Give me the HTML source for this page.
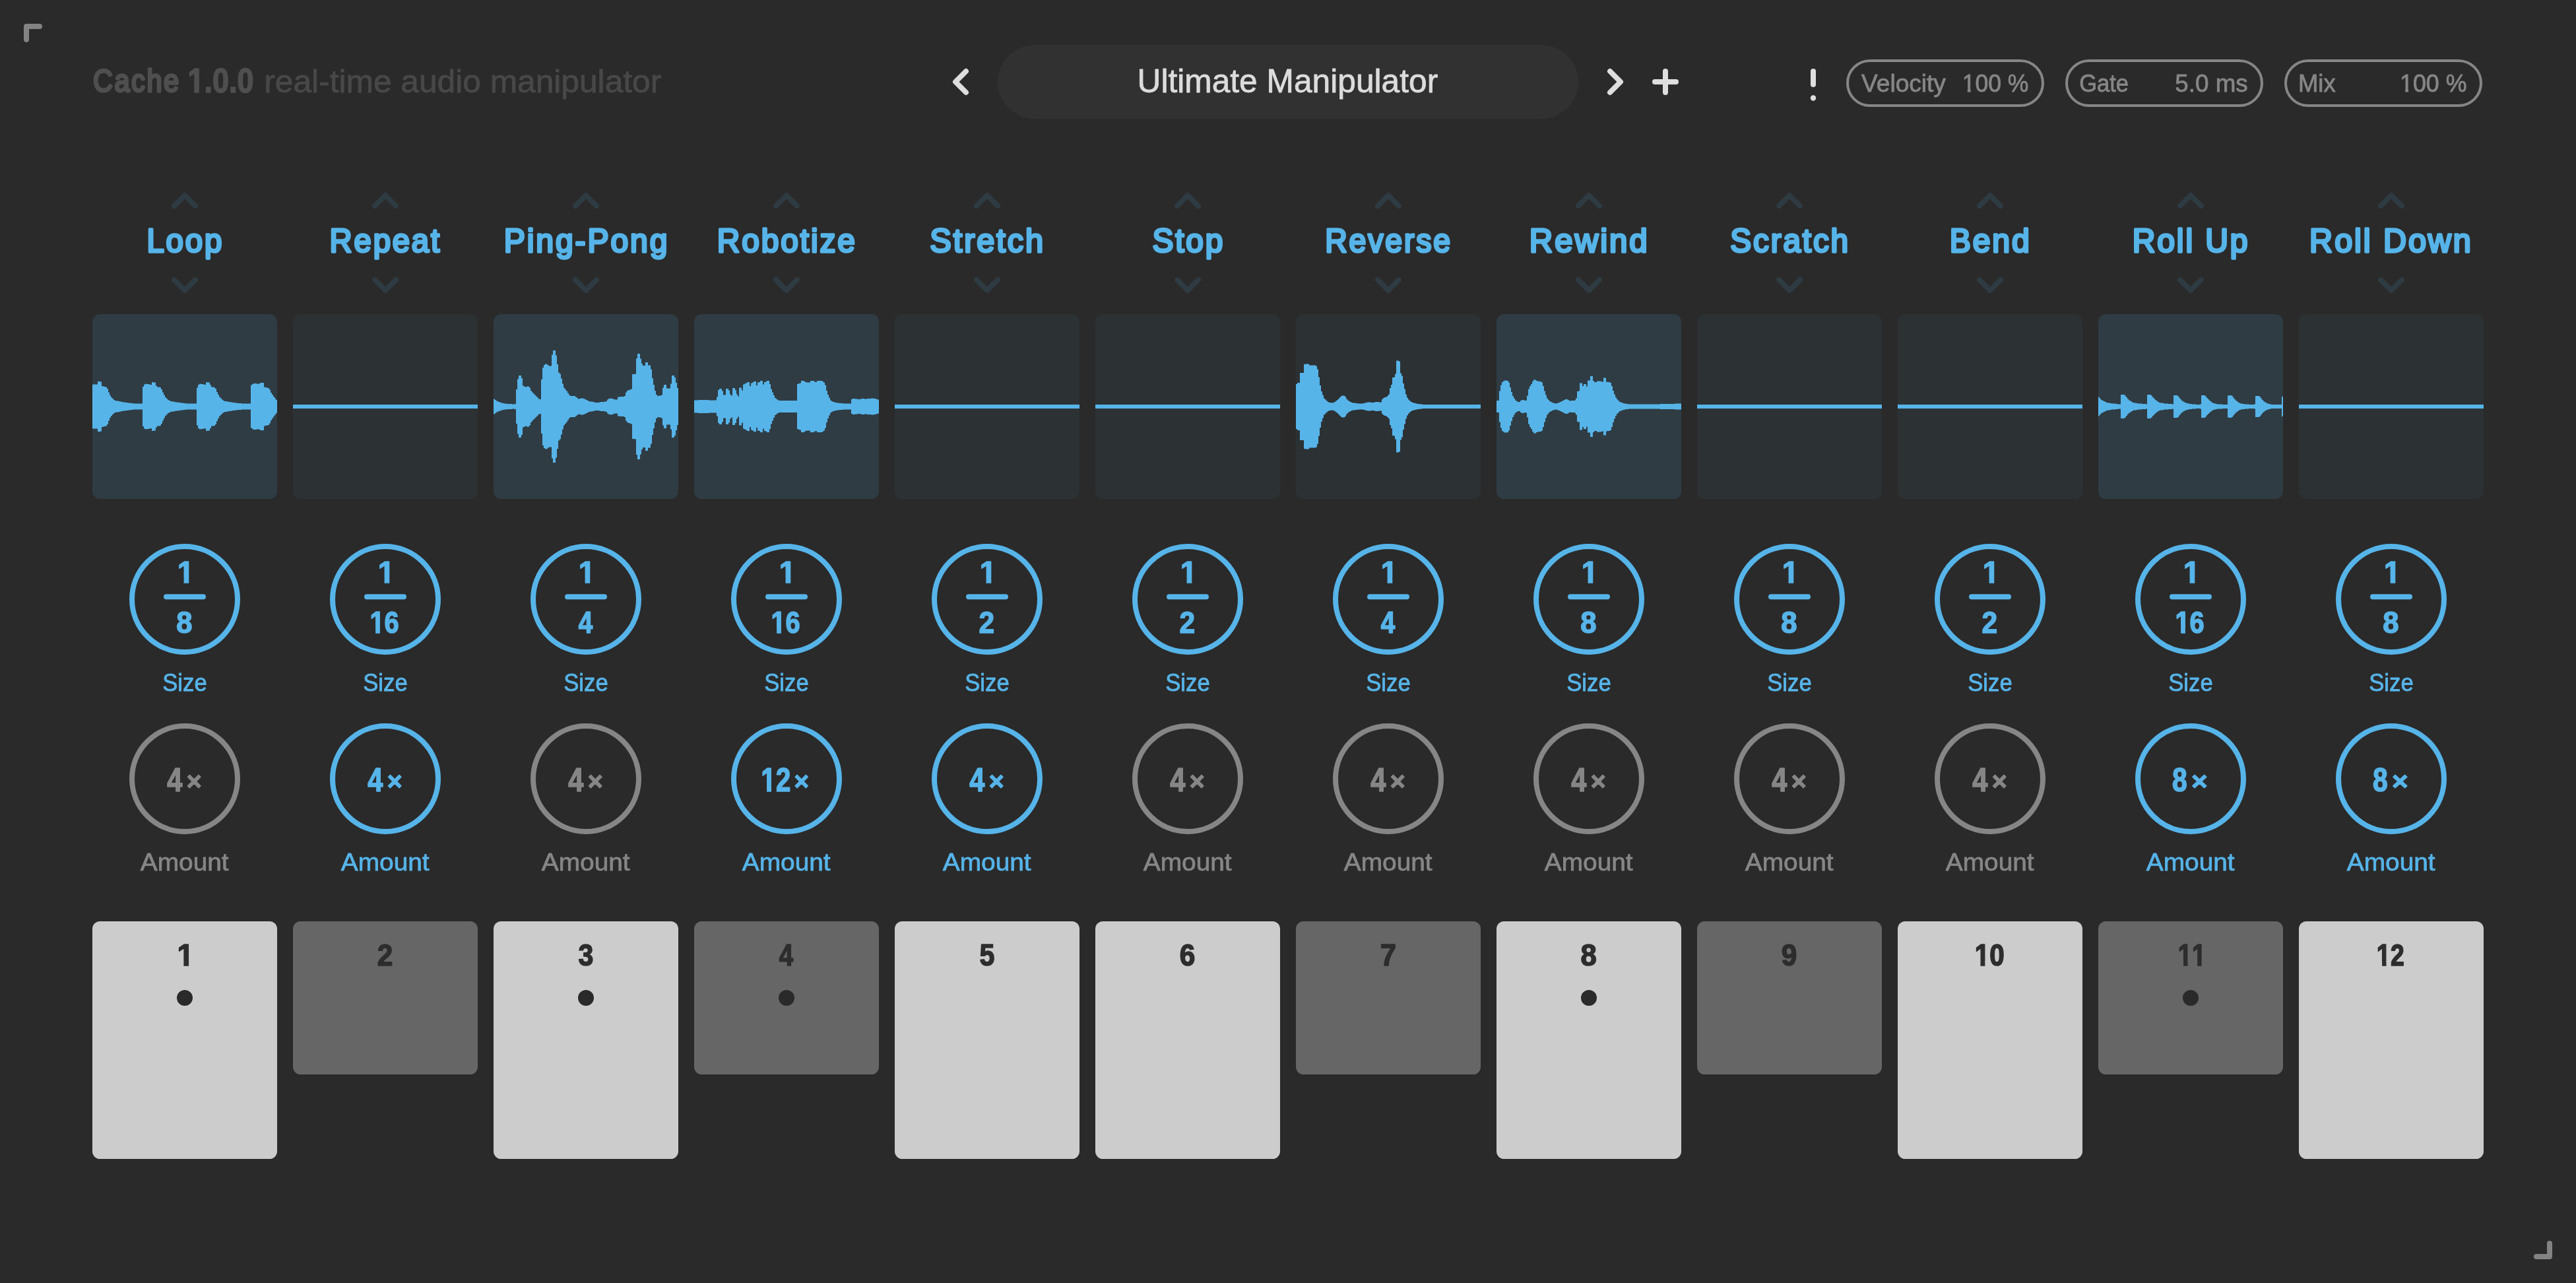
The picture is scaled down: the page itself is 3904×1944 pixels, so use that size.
<!DOCTYPE html>
<html lang="en"><head><meta charset="utf-8"><title>Cache 1.0.0</title>
<style>html,body{margin:0;padding:0;background:#2a2a2a;}body{width:3904px;height:1944px;overflow:hidden;font-family:"Liberation Sans",sans-serif;}svg{display:block;will-change:transform}svg text.d{font-size:100px;font-weight:bold;font-kerning:none}svg text{vector-effect:non-scaling-stroke;stroke-linejoin:round;stroke-linecap:round}</style>
</head><body>
<svg width="3904" height="1944" viewBox="0 0 3904 1944" font-family='"Liberation Sans", sans-serif'>
<rect width="3904" height="1944" fill="#2a2a2a"/>
<g fill="none" stroke="#838383" stroke-width="8" stroke-linecap="round" stroke-linejoin="round">
<polyline points="40,60 40,40 60,40"/>
<polyline points="3844,1904 3864,1904 3864,1884"/>
</g>
<rect x="1512" y="68" width="880" height="112" rx="56" fill="#313131"/>
<g fill="none" stroke="#dedede" stroke-width="8" stroke-linecap="round" stroke-linejoin="round">
<polyline points="1464,108 1448,124 1464,140"/>
<polyline points="2440,108 2456,124 2440,140"/>
<path d="M2508 124H2540M2524 108V140"/>
<path d="M2748 108V128"/>
</g>
<circle cx="2748" cy="148.5" r="4.2" fill="#dedede"/>
<rect x="2800" y="92" width="296" height="68" rx="34" fill="none" stroke="#868686" stroke-width="4"/>
<rect x="3132" y="92" width="296" height="68" rx="34" fill="none" stroke="#868686" stroke-width="4"/>
<rect x="3464" y="92" width="296" height="68" rx="34" fill="none" stroke="#868686" stroke-width="4"/>
<g fill="none" stroke="#2f3b43" stroke-width="8" stroke-linecap="round" stroke-linejoin="round"><polyline points="264,312 280,296 296,312"/><polyline points="264,424 280,440 296,424"/></g>
<rect x="140" y="476" width="280" height="280" rx="11.5" fill="#2f3c44"/>
<path d="M140,582.5H148V578.0H152V578.5H154V585.0H156V585.5H158V586.0H160V586.5H162V589.0H164V594.5H166V599.0H168V602.0H170V604.0H172V606.0H174V607.0H176V607.5H180V608.0H182V608.5H184V609.0H186V609.5H190V610.0H194V610.5H198V611.0H202V611.5H216V586.0H218V582.5H220V581.5H222V582.0H226V582.5H228V583.0H230V579.0H232V579.5H236V584.5H238V586.5H242V587.0H244V590.0H246V594.5H248V598.5H250V602.0H252V604.0H254V606.0H256V607.0H258V608.0H260V608.5H264V609.0H266V609.5H270V610.0H274V610.5H278V611.0H282V611.5H298V587.5H300V583.0H302V581.5H304V582.0H308V582.5H310V583.0H312V579.0H314V579.5H318V583.0H320V586.5H324V587.0H326V589.0H328V594.0H330V598.0H332V601.5H334V603.5H336V605.5H338V607.0H340V608.0H344V608.5H346V609.0H350V609.5H352V610.0H356V610.5H360V611.0H366V611.5H380V583.5H382V582.0H384V581.0H388V581.5H394V580.0H400V586.5H402V587.0H404V587.5H406V588.0H408V590.5H410V595.0H412V598.0H414V601.0H416V603.5H418V606.0H420V626.0H418V628.5H416V631.0H414V634.0H412V637.0H410V641.5H408V644.0H406V644.5H404V645.0H402V645.5H400V652.0H394V650.5H388V651.0H384V650.0H382V648.5H380V620.5H366V621.0H360V621.5H356V622.0H352V622.5H350V623.0H346V623.5H344V624.0H340V625.0H338V626.5H336V628.5H334V630.5H332V634.0H330V638.0H328V643.0H326V645.0H324V645.5H320V649.0H318V652.5H314V653.0H312V649.0H310V649.5H308V650.0H304V650.5H302V649.0H300V644.5H298V620.5H282V621.0H278V621.5H274V622.0H270V622.5H266V623.0H264V623.5H260V624.0H258V625.0H256V626.0H254V628.0H252V630.0H250V633.5H248V637.5H246V642.0H244V645.0H242V645.5H238V647.5H236V652.5H232V653.0H230V649.0H228V649.5H226V650.0H222V650.5H220V649.5H218V646.0H216V620.5H202V621.0H198V621.5H194V622.0H190V622.5H186V623.0H184V623.5H182V624.0H180V624.5H176V625.0H174V626.0H172V628.0H170V630.0H168V633.0H166V637.5H164V643.0H162V645.5H160V646.0H158V646.5H156V647.0H154V653.5H152V654.0H148V649.5H140Z" fill="#56b4e9"/>
<circle cx="280" cy="908" r="80" fill="none" stroke="#56b4e9" stroke-width="8"/>
<path d="M252 904.3H308" stroke="#56b4e9" stroke-width="8" stroke-linecap="round"/>
<circle cx="280" cy="1180" r="80" fill="none" stroke="#868686" stroke-width="8"/>
<rect x="140" y="1396" width="280" height="360" rx="11.5" fill="#cccccc"/>
<circle cx="280" cy="1512" r="12" fill="#2a2a2a"/>
<g fill="none" stroke="#2f3b43" stroke-width="8" stroke-linecap="round" stroke-linejoin="round"><polyline points="568,312 584,296 600,312"/><polyline points="568,424 584,440 600,424"/></g>
<rect x="444" y="476" width="280" height="280" rx="11.5" fill="#2c3134"/>
<rect x="444" y="613" width="280" height="6" fill="#56b4e9"/>
<circle cx="584" cy="908" r="80" fill="none" stroke="#56b4e9" stroke-width="8"/>
<path d="M556 904.3H612" stroke="#56b4e9" stroke-width="8" stroke-linecap="round"/>
<circle cx="584" cy="1180" r="80" fill="none" stroke="#56b4e9" stroke-width="8"/>
<rect x="444" y="1396" width="280" height="232" rx="11.5" fill="#666666"/>
<g fill="none" stroke="#2f3b43" stroke-width="8" stroke-linecap="round" stroke-linejoin="round"><polyline points="872,312 888,296 904,312"/><polyline points="872,424 888,440 904,424"/></g>
<rect x="748" y="476" width="280" height="280" rx="11.5" fill="#2f3c44"/>
<path d="M748,604.5H750V606.0H752V607.5H754V608.5H756V609.0H758V610.0H760V610.5H762V611.0H764V611.5H768V612.0H776V612.5H780V612.0H782V590.0H784V574.5H786V569.0H790V573.0H792V584.5H794V585.5H796V586.5H798V585.5H802V587.5H804V592.0H806V594.5H808V596.5H810V598.5H812V600.5H814V602.5H816V604.5H818V605.0H820V575.0H822V557.0H824V553.0H826V551.5H828V552.0H830V553.5H832V554.5H836V537.5H838V531.0H842V538.5H844V552.0H846V564.5H848V566.5H850V573.5H852V581.5H854V587.5H856V590.0H858V592.5H860V595.5H862V598.5H864V600.0H872V601.5H874V603.0H876V604.5H878V604.0H880V603.5H884V604.0H886V605.0H888V606.0H890V607.0H892V608.0H894V608.5H898V609.0H900V609.5H902V610.0H908V609.5H910V609.0H916V608.5H918V608.0H920V605.5H922V604.0H926V603.5H928V604.5H930V605.0H932V605.5H936V601.5H940V601.0H946V600.0H948V594.5H950V592.0H952V591.0H954V590.5H956V589.5H958V567.0H962V566.5H964V543.0H966V536.0H970V543.5H972V551.0H974V554.0H978V549.0H982V553.5H986V559.5H988V573.0H990V583.0H992V592.0H994V598.0H996V600.0H998V599.5H1002V598.5H1004V587.5H1006V583.0H1010V588.5H1016V581.5H1018V569.0H1022V572.0H1024V580.0H1026V588.0H1028V644.0H1026V652.0H1024V660.0H1022V663.0H1018V650.5H1016V643.5H1010V649.0H1006V644.5H1004V633.5H1002V632.5H998V632.0H996V634.0H994V640.0H992V649.0H990V659.0H988V672.5H986V678.5H982V683.0H978V678.0H974V681.0H972V688.5H970V696.0H966V689.0H964V665.5H962V665.0H958V642.5H956V641.5H954V641.0H952V640.0H950V637.5H948V632.0H946V631.0H940V630.5H936V626.5H932V627.0H930V627.5H928V628.5H926V628.0H922V626.5H920V624.0H918V623.5H916V623.0H910V622.5H908V622.0H902V622.5H900V623.0H898V623.5H894V624.0H892V625.0H890V626.0H888V627.0H886V628.0H884V628.5H880V628.0H878V627.5H876V629.0H874V630.5H872V632.0H864V633.5H862V636.5H860V639.5H858V642.0H856V644.5H854V650.5H852V658.5H850V665.5H848V667.5H846V680.0H844V693.5H842V701.0H838V694.5H836V677.5H832V678.5H830V680.0H828V680.5H826V679.0H824V675.0H822V657.0H820V627.0H818V627.5H816V629.5H814V631.5H812V633.5H810V635.5H808V637.5H806V640.0H804V644.5H802V646.5H798V645.5H796V646.5H794V647.5H792V659.0H790V663.0H786V657.5H784V642.0H782V620.0H780V619.5H776V620.0H768V620.5H764V621.0H762V621.5H760V622.0H758V623.0H756V623.5H754V624.5H752V626.0H750V627.5H748Z" fill="#56b4e9"/>
<circle cx="888" cy="908" r="80" fill="none" stroke="#56b4e9" stroke-width="8"/>
<path d="M860 904.3H916" stroke="#56b4e9" stroke-width="8" stroke-linecap="round"/>
<circle cx="888" cy="1180" r="80" fill="none" stroke="#868686" stroke-width="8"/>
<rect x="748" y="1396" width="280" height="360" rx="11.5" fill="#cccccc"/>
<circle cx="888" cy="1512" r="12" fill="#2a2a2a"/>
<g fill="none" stroke="#2f3b43" stroke-width="8" stroke-linecap="round" stroke-linejoin="round"><polyline points="1176,312 1192,296 1208,312"/><polyline points="1176,424 1192,440 1208,424"/></g>
<rect x="1052" y="476" width="280" height="280" rx="11.5" fill="#2f3c44"/>
<path d="M1052,606.5H1058V606.0H1074V606.5H1086V601.5H1088V591.0H1090V589.0H1094V592.5H1096V598.5H1100V589.0H1104V591.5H1106V597.5H1108V599.5H1110V588.0H1114V591.0H1116V597.5H1118V600.5H1120V587.5H1124V591.5H1126V582.5H1128V581.5H1130V580.5H1132V579.0H1136V585.0H1138V580.5H1140V579.5H1142V578.0H1146V584.0H1148V579.5H1150V579.0H1152V577.0H1156V582.5H1158V579.0H1160V578.5H1162V577.0H1166V582.0H1168V589.5H1170V594.5H1172V599.0H1174V603.0H1176V604.5H1178V606.0H1180V607.0H1208V582.0H1210V581.0H1212V580.5H1214V577.0H1218V577.5H1220V579.0H1222V579.5H1228V577.0H1234V578.5H1236V579.0H1238V577.0H1246V578.0H1248V579.5H1250V583.5H1252V592.0H1254V598.0H1256V602.5H1258V606.5H1260V608.0H1262V609.0H1264V609.5H1266V610.0H1268V610.5H1272V611.0H1278V611.5H1290V605.0H1292V604.0H1296V604.5H1300V605.0H1304V604.5H1306V604.0H1310V604.5H1314V604.0H1320V603.5H1324V604.0H1328V605.0H1330V605.5H1332V626.5H1330V627.0H1328V628.0H1324V628.5H1320V628.0H1314V627.5H1310V628.0H1306V627.5H1304V627.0H1300V627.5H1296V628.0H1292V627.0H1290V620.5H1278V621.0H1272V621.5H1268V622.0H1266V622.5H1264V623.0H1262V624.0H1260V625.5H1258V629.5H1256V634.0H1254V640.0H1252V648.5H1250V652.5H1248V654.0H1246V655.0H1238V653.0H1236V653.5H1234V655.0H1228V652.5H1222V653.0H1220V654.5H1218V655.0H1214V651.5H1212V651.0H1210V650.0H1208V625.0H1180V626.0H1178V627.5H1176V629.0H1174V633.0H1172V637.5H1170V642.5H1168V650.0H1166V655.0H1162V653.5H1160V653.0H1158V649.5H1156V655.0H1152V653.0H1150V652.5H1148V648.0H1146V654.0H1142V652.5H1140V651.5H1138V647.0H1136V653.0H1132V651.5H1130V650.5H1128V649.5H1126V640.5H1124V644.5H1120V631.5H1118V634.5H1116V641.0H1114V644.0H1110V632.5H1108V634.5H1106V640.5H1104V643.0H1100V633.5H1096V639.5H1094V643.0H1090V641.0H1088V630.5H1086V625.5H1074V626.0H1058V625.5H1052Z" fill="#56b4e9"/>
<circle cx="1192" cy="908" r="80" fill="none" stroke="#56b4e9" stroke-width="8"/>
<path d="M1164 904.3H1220" stroke="#56b4e9" stroke-width="8" stroke-linecap="round"/>
<circle cx="1192" cy="1180" r="80" fill="none" stroke="#56b4e9" stroke-width="8"/>
<rect x="1052" y="1396" width="280" height="232" rx="11.5" fill="#666666"/>
<circle cx="1192" cy="1512" r="12" fill="#2a2a2a"/>
<g fill="none" stroke="#2f3b43" stroke-width="8" stroke-linecap="round" stroke-linejoin="round"><polyline points="1480,312 1496,296 1512,312"/><polyline points="1480,424 1496,440 1512,424"/></g>
<rect x="1356" y="476" width="280" height="280" rx="11.5" fill="#2c3134"/>
<rect x="1356" y="613" width="280" height="6" fill="#56b4e9"/>
<circle cx="1496" cy="908" r="80" fill="none" stroke="#56b4e9" stroke-width="8"/>
<path d="M1468 904.3H1524" stroke="#56b4e9" stroke-width="8" stroke-linecap="round"/>
<circle cx="1496" cy="1180" r="80" fill="none" stroke="#56b4e9" stroke-width="8"/>
<rect x="1356" y="1396" width="280" height="360" rx="11.5" fill="#cccccc"/>
<g fill="none" stroke="#2f3b43" stroke-width="8" stroke-linecap="round" stroke-linejoin="round"><polyline points="1784,312 1800,296 1816,312"/><polyline points="1784,424 1800,440 1816,424"/></g>
<rect x="1660" y="476" width="280" height="280" rx="11.5" fill="#2c3134"/>
<rect x="1660" y="613" width="280" height="6" fill="#56b4e9"/>
<circle cx="1800" cy="908" r="80" fill="none" stroke="#56b4e9" stroke-width="8"/>
<path d="M1772 904.3H1828" stroke="#56b4e9" stroke-width="8" stroke-linecap="round"/>
<circle cx="1800" cy="1180" r="80" fill="none" stroke="#868686" stroke-width="8"/>
<rect x="1660" y="1396" width="280" height="360" rx="11.5" fill="#cccccc"/>
<g fill="none" stroke="#2f3b43" stroke-width="8" stroke-linecap="round" stroke-linejoin="round"><polyline points="2088,312 2104,296 2120,312"/><polyline points="2088,424 2104,440 2120,424"/></g>
<rect x="1964" y="476" width="280" height="280" rx="11.5" fill="#2c3134"/>
<path d="M1964,582.0H1966V580.0H1970V565.0H1976V552.0H1978V551.5H1984V553.5H1994V554.5H1996V559.5H1998V571.5H2000V584.0H2002V593.0H2004V598.5H2006V603.5H2008V605.5H2010V607.5H2012V609.0H2014V610.0H2018V610.5H2020V610.0H2022V609.0H2024V607.5H2026V606.0H2028V604.0H2030V602.0H2032V600.0H2034V599.5H2038V601.0H2040V604.5H2042V606.5H2044V608.0H2046V609.0H2048V610.0H2050V610.5H2054V611.0H2058V611.5H2066V611.0H2068V610.5H2070V610.0H2072V609.5H2078V610.0H2082V609.5H2084V609.0H2090V609.5H2094V605.0H2096V603.0H2098V602.0H2100V601.5H2102V600.0H2104V597.5H2106V588.0H2108V583.0H2110V572.0H2112V571.5H2114V566.5H2116V546.5H2120V547.5H2122V565.5H2124V569.5H2126V581.0H2128V589.5H2130V597.5H2132V602.5H2134V605.5H2136V607.5H2138V609.0H2140V610.0H2142V610.5H2144V611.0H2146V611.5H2148V612.0H2152V612.5H2156V613H2244V619H2156V619.5H2152V620.0H2148V620.5H2146V621.0H2144V621.5H2142V622.0H2140V623.0H2138V624.5H2136V626.5H2134V629.5H2132V634.5H2130V642.5H2128V651.0H2126V662.5H2124V666.5H2122V684.5H2120V685.5H2116V665.5H2114V660.5H2112V660.0H2110V649.0H2108V644.0H2106V634.5H2104V632.0H2102V630.5H2100V630.0H2098V629.0H2096V627.0H2094V622.5H2090V623.0H2084V622.5H2082V622.0H2078V622.5H2072V622.0H2070V621.5H2068V621.0H2066V620.5H2058V621.0H2054V621.5H2050V622.0H2048V623.0H2046V624.0H2044V625.5H2042V627.5H2040V631.0H2038V632.5H2034V632.0H2032V630.0H2030V628.0H2028V626.0H2026V624.5H2024V623.0H2022V622.0H2020V621.5H2018V622.0H2014V623.0H2012V624.5H2010V626.5H2008V628.5H2006V633.5H2004V639.0H2002V648.0H2000V660.5H1998V672.5H1996V677.5H1994V678.5H1984V680.5H1978V680.0H1976V667.0H1970V652.0H1966V650.0H1964Z" fill="#56b4e9"/>
<circle cx="2104" cy="908" r="80" fill="none" stroke="#56b4e9" stroke-width="8"/>
<path d="M2076 904.3H2132" stroke="#56b4e9" stroke-width="8" stroke-linecap="round"/>
<circle cx="2104" cy="1180" r="80" fill="none" stroke="#868686" stroke-width="8"/>
<rect x="1964" y="1396" width="280" height="232" rx="11.5" fill="#666666"/>
<g fill="none" stroke="#2f3b43" stroke-width="8" stroke-linecap="round" stroke-linejoin="round"><polyline points="2392,312 2408,296 2424,312"/><polyline points="2392,424 2408,440 2424,424"/></g>
<rect x="2268" y="476" width="280" height="280" rx="11.5" fill="#2f3c44"/>
<path d="M2268,607.0H2272V592.5H2274V583.5H2276V579.0H2278V577.5H2280V576.5H2284V577.0H2286V579.5H2288V587.0H2290V594.0H2292V600.0H2294V603.5H2296V606.5H2298V608.0H2300V609.0H2304V607.0H2306V606.0H2310V607.0H2312V606.5H2314V599.5H2316V589.5H2318V585.0H2320V582.0H2322V578.0H2324V575.5H2328V577.0H2330V577.5H2332V578.0H2336V579.5H2338V585.0H2340V592.5H2342V598.5H2344V603.5H2346V606.0H2348V608.0H2350V609.0H2352V610.0H2354V611.0H2358V611.5H2360V610.5H2362V610.0H2364V609.0H2366V608.0H2368V607.0H2370V606.0H2372V605.0H2376V606.0H2378V607.5H2380V607.0H2386V606.5H2388V603.5H2390V593.0H2392V592.5H2394V580.5H2398V585.0H2400V582.0H2404V585.5H2406V576.5H2410V570.0H2414V577.0H2416V579.0H2420V577.5H2426V578.0H2428V578.5H2430V572.5H2434V578.5H2436V579.0H2440V580.0H2442V585.0H2444V592.0H2446V597.5H2448V602.0H2450V605.0H2452V607.0H2454V609.0H2456V609.5H2458V610.5H2460V611.0H2462V611.5H2464V612.0H2468V612.5H2516V612.0H2538V611.5H2548V620.5H2538V620.0H2516V619.5H2468V620.0H2464V620.5H2462V621.0H2460V621.5H2458V622.5H2456V623.0H2454V625.0H2452V627.0H2450V630.0H2448V634.5H2446V640.0H2444V647.0H2442V652.0H2440V653.0H2436V653.5H2434V659.5H2430V653.5H2428V654.0H2426V654.5H2420V653.0H2416V655.0H2414V662.0H2410V655.5H2406V646.5H2404V650.0H2400V647.0H2398V651.5H2394V639.5H2392V639.0H2390V628.5H2388V625.5H2386V625.0H2380V624.5H2378V626.0H2376V627.0H2372V626.0H2370V625.0H2368V624.0H2366V623.0H2364V622.0H2362V621.5H2360V620.5H2358V621.0H2354V622.0H2352V623.0H2350V624.0H2348V626.0H2346V628.5H2344V633.5H2342V639.5H2340V647.0H2338V652.5H2336V654.0H2332V654.5H2330V655.0H2328V656.5H2324V654.0H2322V650.0H2320V647.0H2318V642.5H2316V632.5H2314V625.5H2312V625.0H2310V626.0H2306V625.0H2304V623.0H2300V624.0H2298V625.5H2296V628.5H2294V632.0H2292V638.0H2290V645.0H2288V652.5H2286V655.0H2284V655.5H2280V654.5H2278V653.0H2276V648.5H2274V639.5H2272V625.0H2268Z" fill="#56b4e9"/>
<circle cx="2408" cy="908" r="80" fill="none" stroke="#56b4e9" stroke-width="8"/>
<path d="M2380 904.3H2436" stroke="#56b4e9" stroke-width="8" stroke-linecap="round"/>
<circle cx="2408" cy="1180" r="80" fill="none" stroke="#868686" stroke-width="8"/>
<rect x="2268" y="1396" width="280" height="360" rx="11.5" fill="#cccccc"/>
<circle cx="2408" cy="1512" r="12" fill="#2a2a2a"/>
<g fill="none" stroke="#2f3b43" stroke-width="8" stroke-linecap="round" stroke-linejoin="round"><polyline points="2696,312 2712,296 2728,312"/><polyline points="2696,424 2712,440 2728,424"/></g>
<rect x="2572" y="476" width="280" height="280" rx="11.5" fill="#2c3134"/>
<rect x="2572" y="613" width="280" height="6" fill="#56b4e9"/>
<circle cx="2712" cy="908" r="80" fill="none" stroke="#56b4e9" stroke-width="8"/>
<path d="M2684 904.3H2740" stroke="#56b4e9" stroke-width="8" stroke-linecap="round"/>
<circle cx="2712" cy="1180" r="80" fill="none" stroke="#868686" stroke-width="8"/>
<rect x="2572" y="1396" width="280" height="232" rx="11.5" fill="#666666"/>
<g fill="none" stroke="#2f3b43" stroke-width="8" stroke-linecap="round" stroke-linejoin="round"><polyline points="3000,312 3016,296 3032,312"/><polyline points="3000,424 3016,440 3032,424"/></g>
<rect x="2876" y="476" width="280" height="280" rx="11.5" fill="#2c3134"/>
<rect x="2876" y="613" width="280" height="6" fill="#56b4e9"/>
<circle cx="3016" cy="908" r="80" fill="none" stroke="#56b4e9" stroke-width="8"/>
<path d="M2988 904.3H3044" stroke="#56b4e9" stroke-width="8" stroke-linecap="round"/>
<circle cx="3016" cy="1180" r="80" fill="none" stroke="#868686" stroke-width="8"/>
<rect x="2876" y="1396" width="280" height="360" rx="11.5" fill="#cccccc"/>
<g fill="none" stroke="#2f3b43" stroke-width="8" stroke-linecap="round" stroke-linejoin="round"><polyline points="3304,312 3320,296 3336,312"/><polyline points="3304,424 3320,440 3336,424"/></g>
<rect x="3180" y="476" width="280" height="280" rx="11.5" fill="#2f3c44"/>
<path d="M3180,601.5H3182V604.0H3184V606.0H3186V607.0H3188V608.0H3190V609.0H3192V610.0H3194V610.5H3198V611.0H3200V611.5H3206V612.0H3210V612.5H3214V598.0H3220V599.5H3222V602.0H3224V604.5H3226V606.5H3228V607.5H3230V609.0H3232V610.0H3234V610.5H3238V611.0H3240V611.5H3246V612.0H3252V612.5H3254V598.0H3260V599.5H3262V602.0H3264V604.0H3266V606.0H3268V607.5H3270V609.0H3272V610.0H3274V610.5H3278V611.0H3280V611.5H3286V612.0H3292V612.5H3294V599.0H3300V600.0H3302V602.5H3304V605.0H3306V607.0H3308V608.5H3310V609.5H3312V610.5H3314V611.0H3316V611.5H3318V612.0H3322V612.5H3328V613H3334V612.5H3336V599.0H3342V600.5H3344V603.0H3346V605.0H3348V607.0H3350V608.5H3352V610.0H3354V611.0H3356V611.5H3358V612.0H3360V612.5H3368V613H3376V599.5H3378V599.0H3382V600.0H3384V602.5H3386V605.0H3388V607.0H3390V608.5H3392V610.0H3394V611.0H3396V611.5H3398V612.0H3402V612.5H3408V613H3416V612.5H3418V600.0H3424V601.0H3426V603.5H3428V606.0H3430V608.0H3432V609.5H3434V610.5H3436V611.5H3438V612.0H3440V612.5H3442V613H3458V601.0H3460V631.0H3458V619H3442V619.5H3440V620.0H3438V620.5H3436V621.5H3434V622.5H3432V624.0H3430V626.0H3428V628.5H3426V631.0H3424V632.0H3418V619.5H3416V619H3408V619.5H3402V620.0H3398V620.5H3396V621.0H3394V622.0H3392V623.5H3390V625.0H3388V627.0H3386V629.5H3384V632.0H3382V633.0H3378V632.5H3376V619H3368V619.5H3360V620.0H3358V620.5H3356V621.0H3354V622.0H3352V623.5H3350V625.0H3348V627.0H3346V629.0H3344V631.5H3342V633.0H3336V619.5H3334V619H3328V619.5H3322V620.0H3318V620.5H3316V621.0H3314V621.5H3312V622.5H3310V623.5H3308V625.0H3306V627.0H3304V629.5H3302V632.0H3300V633.0H3294V619.5H3292V620.0H3286V620.5H3280V621.0H3278V621.5H3274V622.0H3272V623.0H3270V624.5H3268V626.0H3266V628.0H3264V630.0H3262V632.5H3260V634.0H3254V619.5H3252V620.0H3246V620.5H3240V621.0H3238V621.5H3234V622.0H3232V623.0H3230V624.5H3228V625.5H3226V627.5H3224V630.0H3222V632.5H3220V634.0H3214V619.5H3210V620.0H3206V620.5H3200V621.0H3198V621.5H3194V622.0H3192V623.0H3190V624.0H3188V625.0H3186V626.0H3184V628.0H3182V630.5H3180Z" fill="#56b4e9"/>
<circle cx="3320" cy="908" r="80" fill="none" stroke="#56b4e9" stroke-width="8"/>
<path d="M3292 904.3H3348" stroke="#56b4e9" stroke-width="8" stroke-linecap="round"/>
<circle cx="3320" cy="1180" r="80" fill="none" stroke="#56b4e9" stroke-width="8"/>
<rect x="3180" y="1396" width="280" height="232" rx="11.5" fill="#666666"/>
<circle cx="3320" cy="1512" r="12" fill="#2a2a2a"/>
<g fill="none" stroke="#2f3b43" stroke-width="8" stroke-linecap="round" stroke-linejoin="round"><polyline points="3608,312 3624,296 3640,312"/><polyline points="3608,424 3624,440 3640,424"/></g>
<rect x="3484" y="476" width="280" height="280" rx="11.5" fill="#2c3134"/>
<rect x="3484" y="613" width="280" height="6" fill="#56b4e9"/>
<circle cx="3624" cy="908" r="80" fill="none" stroke="#56b4e9" stroke-width="8"/>
<path d="M3596 904.3H3652" stroke="#56b4e9" stroke-width="8" stroke-linecap="round"/>
<circle cx="3624" cy="1180" r="80" fill="none" stroke="#56b4e9" stroke-width="8"/>
<rect x="3484" y="1396" width="280" height="360" rx="11.5" fill="#cccccc"/>
<defs><clipPath id="c1p0p0"><path d="M-20,-120H400V-14.5H-20ZM-20.00,-16H-1.00V40H-20.00ZM21.74,-16H38.66V40H21.74ZM57.50,-16H400.00V40H57.50Z"/></clipPath><clipPath id="cr100"><path d="M-10,-73.72H368.60V-4.85H-10ZM8.46,-6.35H13.34V36.86H8.46ZM20.71,-6.35H368.60V36.86H20.71Z"/></clipPath><clipPath id="c1"><path d="M-20,-120H400V-14.5H-20ZM-20.00,-16H-1.00V40H-20.00ZM21.74,-16H38.66V40H21.74ZM57.50,-16H400.00V40H57.50Z"/></clipPath><clipPath id="c16"><path d="M-20,-120H400V-14.5H-20ZM-20.00,-16H-1.00V40H-20.00ZM21.74,-16H38.66V40H21.74ZM57.50,-16H400.00V40H57.50Z"/></clipPath><clipPath id="c12"><path d="M-20,-120H400V-14.5H-20ZM-20.00,-16H-1.00V40H-20.00ZM21.74,-16H38.66V40H21.74ZM57.50,-16H400.00V40H57.50Z"/></clipPath><clipPath id="c10"><path d="M-20,-120H400V-14.5H-20ZM-20.00,-16H-1.00V40H-20.00ZM21.74,-16H38.66V40H21.74ZM57.50,-16H400.00V40H57.50Z"/></clipPath><clipPath id="c11"><path d="M-20,-120H400V-14.5H-20ZM-20.00,-16H-1.00V40H-20.00ZM21.74,-16H38.66V40H21.74ZM77.36,-16H94.28V40H77.36ZM113.12,-16H400.00V40H113.12Z"/></clipPath></defs>
<g>
<text transform="translate(141.05,138.70) scale(0.8759,1)" font-size="47.42" letter-spacing="2.85" fill="#4f4f4f" stroke="#4f4f4f" stroke-width="3.2">Cache</text>
<text class="d" transform="translate(284.48,139.55) scale(0.4496,0.5121)" clip-path="url(#c1p0p0)" fill="#4f4f4f" stroke="#4f4f4f" stroke-width="1.5">1.0.0</text>
<text transform="translate(400.29,139.90) scale(1.0310,1)" font-size="48.2" fill="#484848" stroke="#484848" stroke-width="0.8">real-time audio manipulator</text>
<text transform="translate(1723.49,140.00) scale(1.0087,1)" font-size="49.28" fill="#dcdcdc" stroke="#dcdcdc" stroke-width="0.8">Ultimate Manipulator</text>
<text transform="translate(2821.10,139.30) scale(1.0061,1)" font-size="36.86" fill="#868686" stroke="#868686" stroke-width="0.8">Velocity</text>
<text transform="translate(2973.68,139.30) scale(0.9632,1)" font-size="36.86" clip-path="url(#cr100)" fill="#868686" stroke="#868686" stroke-width="0.8">100 %</text>
<text transform="translate(3151.18,139.30) scale(0.9375,1)" font-size="36.86" fill="#868686" stroke="#868686" stroke-width="0.8">Gate</text>
<text transform="translate(3296.25,139.30) scale(0.9990,1)" font-size="36.86" fill="#868686" stroke="#868686" stroke-width="0.8">5.0 ms</text>
<text transform="translate(3483.06,139.30) scale(0.9863,1)" font-size="36.86" fill="#868686" stroke="#868686" stroke-width="0.8">Mix</text>
<text transform="translate(3637.06,139.30) scale(0.9703,1)" font-size="36.86" clip-path="url(#cr100)" fill="#868686" stroke="#868686" stroke-width="0.8">100 %</text>
<text transform="translate(222.41,382.39) scale(0.9327,1)" font-size="50.83" letter-spacing="3.05" fill="#56b4e9" stroke="#56b4e9" stroke-width="3.43">Loop</text>
<text class="d" transform="translate(268.75,883.25) scale(0.4533,0.4638)" clip-path="url(#c1)" fill="#56b4e9" stroke="#56b4e9" stroke-width="1.5">1</text>
<text class="d" transform="translate(267.24,959.25) scale(0.4360,0.4582)" fill="#56b4e9" stroke="#56b4e9" stroke-width="1.5">8</text>
<text transform="translate(246.22,1047.10) scale(0.9412,1)" font-size="36.86" fill="#56b4e9" stroke="#56b4e9" stroke-width="0.8">Size</text>
<g><text class="d" transform="translate(253.25,1199.05) scale(0.4142,0.5035)" fill="#868686" stroke="#868686" stroke-width="1.5">4</text><text class="d" transform="translate(282.83,1196.80) scale(0.3918,0.3911)" fill="#868686" stroke="#868686" stroke-width="1.5">×</text></g>
<text transform="translate(212.80,1319.20) scale(1.0538,1)" font-size="36.86" fill="#868686" stroke="#868686" stroke-width="0.8">Amount</text>
<text class="d" transform="translate(268.55,1463.35) scale(0.4533,0.4652)" clip-path="url(#c1)" fill="#2d2d2d" stroke="#2d2d2d" stroke-width="1.5">1</text>
<text transform="translate(499.62,382.39) scale(0.9294,1)" font-size="50.83" letter-spacing="3.05" fill="#56b4e9" stroke="#56b4e9" stroke-width="3.43">Repeat</text>
<text class="d" transform="translate(572.75,883.25) scale(0.4533,0.4638)" clip-path="url(#c1)" fill="#56b4e9" stroke="#56b4e9" stroke-width="1.5">1</text>
<text class="d" transform="translate(560.53,959.25) scale(0.3974,0.4582)" clip-path="url(#c16)" fill="#56b4e9" stroke="#56b4e9" stroke-width="1.5">16</text>
<text transform="translate(550.22,1047.10) scale(0.9412,1)" font-size="36.86" fill="#56b4e9" stroke="#56b4e9" stroke-width="0.8">Size</text>
<g><text class="d" transform="translate(557.25,1199.05) scale(0.4142,0.5035)" fill="#56b4e9" stroke="#56b4e9" stroke-width="1.5">4</text><text class="d" transform="translate(586.83,1196.80) scale(0.3918,0.3911)" fill="#56b4e9" stroke="#56b4e9" stroke-width="1.5">×</text></g>
<text transform="translate(516.80,1319.20) scale(1.0538,1)" font-size="36.86" fill="#56b4e9" stroke="#56b4e9" stroke-width="0.8">Amount</text>
<text class="d" transform="translate(571.77,1463.35) scale(0.4240,0.4652)" fill="#2d2d2d" stroke="#2d2d2d" stroke-width="1.5">2</text>
<text transform="translate(763.76,382.39) scale(0.9464,1)" font-size="50.83" letter-spacing="3.05" fill="#56b4e9" stroke="#56b4e9" stroke-width="3.43">Ping-Pong</text>
<text class="d" transform="translate(876.75,883.25) scale(0.4533,0.4638)" clip-path="url(#c1)" fill="#56b4e9" stroke="#56b4e9" stroke-width="1.5">1</text>
<text class="d" transform="translate(876.65,959.25) scale(0.3858,0.4582)" fill="#56b4e9" stroke="#56b4e9" stroke-width="1.5">4</text>
<text transform="translate(854.22,1047.10) scale(0.9412,1)" font-size="36.86" fill="#56b4e9" stroke="#56b4e9" stroke-width="0.8">Size</text>
<g><text class="d" transform="translate(861.25,1199.05) scale(0.4142,0.5035)" fill="#868686" stroke="#868686" stroke-width="1.5">4</text><text class="d" transform="translate(890.83,1196.80) scale(0.3918,0.3911)" fill="#868686" stroke="#868686" stroke-width="1.5">×</text></g>
<text transform="translate(820.80,1319.20) scale(1.0538,1)" font-size="36.86" fill="#868686" stroke="#868686" stroke-width="0.8">Amount</text>
<text class="d" transform="translate(876.46,1463.35) scale(0.4112,0.4652)" fill="#2d2d2d" stroke="#2d2d2d" stroke-width="1.5">3</text>
<text transform="translate(1086.77,382.39) scale(0.9423,1)" font-size="50.83" letter-spacing="3.05" fill="#56b4e9" stroke="#56b4e9" stroke-width="3.43">Robotize</text>
<text class="d" transform="translate(1180.75,883.25) scale(0.4533,0.4638)" clip-path="url(#c1)" fill="#56b4e9" stroke="#56b4e9" stroke-width="1.5">1</text>
<text class="d" transform="translate(1168.53,959.25) scale(0.3974,0.4582)" clip-path="url(#c16)" fill="#56b4e9" stroke="#56b4e9" stroke-width="1.5">16</text>
<text transform="translate(1158.22,1047.10) scale(0.9412,1)" font-size="36.86" fill="#56b4e9" stroke="#56b4e9" stroke-width="0.8">Size</text>
<g><text class="d" transform="translate(1153.27,1199.05) scale(0.4063,0.5035)" clip-path="url(#c12)" fill="#56b4e9" stroke="#56b4e9" stroke-width="1.5">12</text><text class="d" transform="translate(1203.55,1196.80) scale(0.3840,0.3911)" fill="#56b4e9" stroke="#56b4e9" stroke-width="1.5">×</text></g>
<text transform="translate(1124.80,1319.20) scale(1.0538,1)" font-size="36.86" fill="#56b4e9" stroke="#56b4e9" stroke-width="0.8">Amount</text>
<text class="d" transform="translate(1180.85,1463.35) scale(0.3858,0.4652)" fill="#2d2d2d" stroke="#2d2d2d" stroke-width="1.5">4</text>
<text transform="translate(1409.29,382.39) scale(0.9587,1)" font-size="50.83" letter-spacing="3.05" fill="#56b4e9" stroke="#56b4e9" stroke-width="3.43">Stretch</text>
<text class="d" transform="translate(1484.75,883.25) scale(0.4533,0.4638)" clip-path="url(#c1)" fill="#56b4e9" stroke="#56b4e9" stroke-width="1.5">1</text>
<text class="d" transform="translate(1483.58,959.25) scale(0.4240,0.4582)" fill="#56b4e9" stroke="#56b4e9" stroke-width="1.5">2</text>
<text transform="translate(1462.22,1047.10) scale(0.9412,1)" font-size="36.86" fill="#56b4e9" stroke="#56b4e9" stroke-width="0.8">Size</text>
<g><text class="d" transform="translate(1469.25,1199.05) scale(0.4142,0.5035)" fill="#56b4e9" stroke="#56b4e9" stroke-width="1.5">4</text><text class="d" transform="translate(1498.83,1196.80) scale(0.3918,0.3911)" fill="#56b4e9" stroke="#56b4e9" stroke-width="1.5">×</text></g>
<text transform="translate(1428.80,1319.20) scale(1.0538,1)" font-size="36.86" fill="#56b4e9" stroke="#56b4e9" stroke-width="0.8">Amount</text>
<text class="d" transform="translate(1484.46,1463.35) scale(0.4112,0.4652)" fill="#2d2d2d" stroke="#2d2d2d" stroke-width="1.5">5</text>
<text transform="translate(1746.42,382.39) scale(0.9410,1)" font-size="50.83" letter-spacing="3.05" fill="#56b4e9" stroke="#56b4e9" stroke-width="3.43">Stop</text>
<text class="d" transform="translate(1788.75,883.25) scale(0.4533,0.4638)" clip-path="url(#c1)" fill="#56b4e9" stroke="#56b4e9" stroke-width="1.5">1</text>
<text class="d" transform="translate(1787.58,959.25) scale(0.4240,0.4582)" fill="#56b4e9" stroke="#56b4e9" stroke-width="1.5">2</text>
<text transform="translate(1766.22,1047.10) scale(0.9412,1)" font-size="36.86" fill="#56b4e9" stroke="#56b4e9" stroke-width="0.8">Size</text>
<g><text class="d" transform="translate(1773.25,1199.05) scale(0.4142,0.5035)" fill="#868686" stroke="#868686" stroke-width="1.5">4</text><text class="d" transform="translate(1802.83,1196.80) scale(0.3918,0.3911)" fill="#868686" stroke="#868686" stroke-width="1.5">×</text></g>
<text transform="translate(1732.80,1319.20) scale(1.0538,1)" font-size="36.86" fill="#868686" stroke="#868686" stroke-width="0.8">Amount</text>
<text class="d" transform="translate(1787.78,1463.35) scale(0.4240,0.4652)" fill="#2d2d2d" stroke="#2d2d2d" stroke-width="1.5">6</text>
<text transform="translate(2008.28,382.39) scale(0.9143,1)" font-size="50.83" letter-spacing="3.05" fill="#56b4e9" stroke="#56b4e9" stroke-width="3.43">Reverse</text>
<text class="d" transform="translate(2092.75,883.25) scale(0.4533,0.4638)" clip-path="url(#c1)" fill="#56b4e9" stroke="#56b4e9" stroke-width="1.5">1</text>
<text class="d" transform="translate(2092.65,959.25) scale(0.3858,0.4582)" fill="#56b4e9" stroke="#56b4e9" stroke-width="1.5">4</text>
<text transform="translate(2070.22,1047.10) scale(0.9412,1)" font-size="36.86" fill="#56b4e9" stroke="#56b4e9" stroke-width="0.8">Size</text>
<g><text class="d" transform="translate(2077.25,1199.05) scale(0.4142,0.5035)" fill="#868686" stroke="#868686" stroke-width="1.5">4</text><text class="d" transform="translate(2106.83,1196.80) scale(0.3918,0.3911)" fill="#868686" stroke="#868686" stroke-width="1.5">×</text></g>
<text transform="translate(2036.80,1319.20) scale(1.0538,1)" font-size="36.86" fill="#868686" stroke="#868686" stroke-width="0.8">Amount</text>
<text class="d" transform="translate(2091.73,1463.35) scale(0.4377,0.4652)" fill="#2d2d2d" stroke="#2d2d2d" stroke-width="1.5">7</text>
<text transform="translate(2317.87,382.39) scale(0.9681,1)" font-size="50.83" letter-spacing="3.05" fill="#56b4e9" stroke="#56b4e9" stroke-width="3.43">Rewind</text>
<text class="d" transform="translate(2396.75,883.25) scale(0.4533,0.4638)" clip-path="url(#c1)" fill="#56b4e9" stroke="#56b4e9" stroke-width="1.5">1</text>
<text class="d" transform="translate(2395.24,959.25) scale(0.4360,0.4582)" fill="#56b4e9" stroke="#56b4e9" stroke-width="1.5">8</text>
<text transform="translate(2374.22,1047.10) scale(0.9412,1)" font-size="36.86" fill="#56b4e9" stroke="#56b4e9" stroke-width="0.8">Size</text>
<g><text class="d" transform="translate(2381.25,1199.05) scale(0.4142,0.5035)" fill="#868686" stroke="#868686" stroke-width="1.5">4</text><text class="d" transform="translate(2410.83,1196.80) scale(0.3918,0.3911)" fill="#868686" stroke="#868686" stroke-width="1.5">×</text></g>
<text transform="translate(2340.80,1319.20) scale(1.0538,1)" font-size="36.86" fill="#868686" stroke="#868686" stroke-width="0.8">Amount</text>
<text class="d" transform="translate(2395.44,1463.35) scale(0.4360,0.4652)" fill="#2d2d2d" stroke="#2d2d2d" stroke-width="1.5">8</text>
<text transform="translate(2622.32,382.39) scale(0.9382,1)" font-size="50.83" letter-spacing="3.05" fill="#56b4e9" stroke="#56b4e9" stroke-width="3.43">Scratch</text>
<text class="d" transform="translate(2700.75,883.25) scale(0.4533,0.4638)" clip-path="url(#c1)" fill="#56b4e9" stroke="#56b4e9" stroke-width="1.5">1</text>
<text class="d" transform="translate(2699.24,959.25) scale(0.4360,0.4582)" fill="#56b4e9" stroke="#56b4e9" stroke-width="1.5">8</text>
<text transform="translate(2678.22,1047.10) scale(0.9412,1)" font-size="36.86" fill="#56b4e9" stroke="#56b4e9" stroke-width="0.8">Size</text>
<g><text class="d" transform="translate(2685.25,1199.05) scale(0.4142,0.5035)" fill="#868686" stroke="#868686" stroke-width="1.5">4</text><text class="d" transform="translate(2714.83,1196.80) scale(0.3918,0.3911)" fill="#868686" stroke="#868686" stroke-width="1.5">×</text></g>
<text transform="translate(2644.80,1319.20) scale(1.0538,1)" font-size="36.86" fill="#868686" stroke="#868686" stroke-width="0.8">Amount</text>
<text class="d" transform="translate(2699.78,1463.35) scale(0.4240,0.4652)" fill="#2d2d2d" stroke="#2d2d2d" stroke-width="1.5">9</text>
<text transform="translate(2954.65,382.39) scale(0.9474,1)" font-size="50.83" letter-spacing="3.05" fill="#56b4e9" stroke="#56b4e9" stroke-width="3.43">Bend</text>
<text class="d" transform="translate(3004.75,883.25) scale(0.4533,0.4638)" clip-path="url(#c1)" fill="#56b4e9" stroke="#56b4e9" stroke-width="1.5">1</text>
<text class="d" transform="translate(3003.58,959.25) scale(0.4240,0.4582)" fill="#56b4e9" stroke="#56b4e9" stroke-width="1.5">2</text>
<text transform="translate(2982.22,1047.10) scale(0.9412,1)" font-size="36.86" fill="#56b4e9" stroke="#56b4e9" stroke-width="0.8">Size</text>
<g><text class="d" transform="translate(2989.25,1199.05) scale(0.4142,0.5035)" fill="#868686" stroke="#868686" stroke-width="1.5">4</text><text class="d" transform="translate(3018.83,1196.80) scale(0.3918,0.3911)" fill="#868686" stroke="#868686" stroke-width="1.5">×</text></g>
<text transform="translate(2948.80,1319.20) scale(1.0538,1)" font-size="36.86" fill="#868686" stroke="#868686" stroke-width="0.8">Amount</text>
<text class="d" transform="translate(2992.69,1463.35) scale(0.4036,0.4652)" clip-path="url(#c10)" fill="#2d2d2d" stroke="#2d2d2d" stroke-width="1.5">10</text>
<text transform="translate(3231.66,382.39) scale(0.9455,1)" font-size="50.83" letter-spacing="3.05" fill="#56b4e9" stroke="#56b4e9" stroke-width="3.43">Roll Up</text>
<text class="d" transform="translate(3308.75,883.25) scale(0.4533,0.4638)" clip-path="url(#c1)" fill="#56b4e9" stroke="#56b4e9" stroke-width="1.5">1</text>
<text class="d" transform="translate(3296.53,959.25) scale(0.3974,0.4582)" clip-path="url(#c16)" fill="#56b4e9" stroke="#56b4e9" stroke-width="1.5">16</text>
<text transform="translate(3286.22,1047.10) scale(0.9412,1)" font-size="36.86" fill="#56b4e9" stroke="#56b4e9" stroke-width="0.8">Size</text>
<g><text class="d" transform="translate(3292.07,1199.05) scale(0.4080,0.5035)" fill="#56b4e9" stroke="#56b4e9" stroke-width="1.5">8</text><text class="d" transform="translate(3320.93,1196.80) scale(0.4208,0.3911)" fill="#56b4e9" stroke="#56b4e9" stroke-width="1.5">×</text></g>
<text transform="translate(3252.80,1319.20) scale(1.0538,1)" font-size="36.86" fill="#56b4e9" stroke="#56b4e9" stroke-width="0.8">Amount</text>
<text class="d" transform="translate(3300.86,1463.35) scale(0.3786,0.4652)" clip-path="url(#c11)" fill="#2d2d2d" stroke="#2d2d2d" stroke-width="1.5">11</text>
<text transform="translate(3500.12,382.39) scale(0.9561,1)" font-size="50.83" letter-spacing="3.05" fill="#56b4e9" stroke="#56b4e9" stroke-width="3.43">Roll Down</text>
<text class="d" transform="translate(3612.75,883.25) scale(0.4533,0.4638)" clip-path="url(#c1)" fill="#56b4e9" stroke="#56b4e9" stroke-width="1.5">1</text>
<text class="d" transform="translate(3611.24,959.25) scale(0.4360,0.4582)" fill="#56b4e9" stroke="#56b4e9" stroke-width="1.5">8</text>
<text transform="translate(3590.22,1047.10) scale(0.9412,1)" font-size="36.86" fill="#56b4e9" stroke="#56b4e9" stroke-width="0.8">Size</text>
<g><text class="d" transform="translate(3596.07,1199.05) scale(0.4080,0.5035)" fill="#56b4e9" stroke="#56b4e9" stroke-width="1.5">8</text><text class="d" transform="translate(3624.93,1196.80) scale(0.4208,0.3911)" fill="#56b4e9" stroke="#56b4e9" stroke-width="1.5">×</text></g>
<text transform="translate(3556.80,1319.20) scale(1.0538,1)" font-size="36.86" fill="#56b4e9" stroke="#56b4e9" stroke-width="0.8">Amount</text>
<text class="d" transform="translate(3601.87,1463.35) scale(0.3778,0.4652)" clip-path="url(#c12)" fill="#2d2d2d" stroke="#2d2d2d" stroke-width="1.5">12</text>
</g>
</svg>
</body></html>
